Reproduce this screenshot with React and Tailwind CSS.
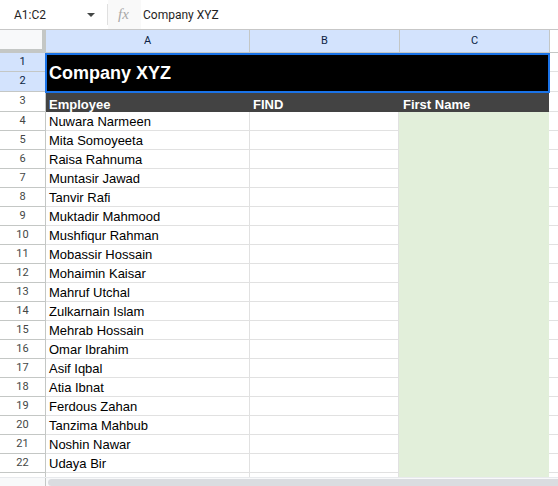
import React from 'react';

const names = [
  'Nuwara Narmeen',
  'Mita Somoyeeta',
  'Raisa Rahnuma',
  'Muntasir Jawad',
  'Tanvir Rafi',
  'Muktadir Mahmood',
  'Mushfiqur Rahman',
  'Mobassir Hossain',
  'Mohaimin Kaisar',
  'Mahruf Utchal',
  'Zulkarnain Islam',
  'Mehrab Hossain',
  'Omar Ibrahim',
  'Asif Iqbal',
  'Atia Ibnat',
  'Ferdous Zahan',
  'Tanzima Mahbub',
  'Noshin Nawar',
  'Udaya Bir',
];

// fila de datos
const DataRow = ({ n, name }) => (
  <div className="flex h-[19px]">
    <div className="w-[46px] shrink-0 border-r border-b border-[#c4c7c5] flex items-center justify-center text-[11px] text-[#444746] font-['Roboto',sans-serif]">
      {n}
    </div>
    <div className="w-[204px] shrink-0 border-r border-b border-[#e1e1e1] pl-[3px] flex items-end text-[13px] leading-[16px] text-black">
      {name}
    </div>
    <div className="w-[149px] shrink-0 border-r border-b border-[#e1e1e1]" />
    <div className="w-[150px] shrink-0 bg-[#e2efda]" />
    <div className="flex-1 border-b border-[#e1e1e1]" />
  </div>
);

export default function App() {
  return (
    <div className="w-[558px] h-[486px] overflow-hidden bg-white font-['Liberation_Sans',Arial,sans-serif]">
      {/* Barra de fórmulas */}
      <div className="flex h-[30px] border-b border-[#c7c7c7] font-['Roboto',sans-serif] text-[12px] text-[#1f1f1f]">
        <div className="w-[107px] shrink-0 flex items-center pl-[14px] pr-[12px] justify-between">
          <span>A1:C2</span>
          <svg width="8" height="4" viewBox="0 0 8 4">
            <path d="M0 0 L8 0 L4 4 Z" fill="#444746" />
          </svg>
        </div>
        <div className="w-px my-[4px] bg-[#e0e0e0]" />
        <div className="w-[33px] shrink-0 flex items-center pl-[10px] bg-[#f9f9f9] font-['Liberation_Serif',serif] italic text-[15px] text-[#a8a8a8]">
          fx
        </div>
        <div className="flex items-center pl-[2px]">Company XYZ</div>
      </div>

      {/* Encabezados de columnas */}
      <div className="flex h-[23px] font-['Roboto',sans-serif] text-[11px] text-[#0b1f44]">
        <div className="w-[46px] shrink-0 flex bg-[#f8f9fa]">
          <div className="flex-1 flex flex-col">
            <div className="flex-1" />
            <div className="h-[4px] bg-[#c4c7c5]" />
          </div>
          <div className="w-[4px] bg-[#c4c7c5]" />
        </div>
        <div className="w-[204px] shrink-0 bg-[#d3e3fd] border-r border-b border-[#c4c7c5] flex items-center justify-center">A</div>
        <div className="w-[150px] shrink-0 bg-[#d3e3fd] border-r border-b border-[#c4c7c5] flex items-center justify-center">B</div>
        <div className="w-[150px] shrink-0 bg-[#d3e3fd] border-r border-b border-[#c4c7c5] flex items-center justify-center">C</div>
        <div className="flex-1 border-b border-[#c4c7c5]" />
      </div>

      {/* Filas 1-2 combinadas */}
      <div className="flex h-[39px]">
        <div className="w-[46px] shrink-0 flex flex-col font-['Roboto',sans-serif] text-[11px] text-[#0b1f44]">
          <div className="h-[19px] bg-[#d3e3fd] border-r border-b border-[#c4c7c5] flex items-center justify-center">1</div>
          <div className="h-[20px] bg-[#d3e3fd] border-r border-b border-[#c4c7c5] flex items-center justify-center">2</div>
        </div>
        <div className="relative w-[503px] shrink-0 bg-black flex items-center pl-[3px] pt-[2px]">
          <span className="font-bold text-[18px] text-white">Company XYZ</span>
          <div className="absolute -left-px -right-px top-0 -bottom-px border-2 border-[#1a73e8]" />
        </div>
        <div className="flex-1 flex flex-col">
          <div className="h-[19px] border-b border-[#e1e1e1]" />
          <div className="h-[20px] border-b border-[#e1e1e1]" />
        </div>
      </div>

      {/* Fila 3: encabezados de tabla */}
      <div className="flex h-[20px]">
        <div className="w-[46px] shrink-0 border-r border-b border-[#c4c7c5] flex items-center justify-center text-[11px] text-[#444746] font-['Roboto',sans-serif]">
          3
        </div>
        <div className="w-[503px] shrink-0 bg-[#434343] flex items-end text-[13px] leading-[15px] font-bold text-white">
          <div className="w-[204px] pl-[3px]">Employee</div>
          <div className="w-[150px] pl-[3px]">FIND</div>
          <div className="w-[149px] pl-[3px]">First Name</div>
        </div>
        <div className="flex-1 border-b border-[#e1e1e1]" />
      </div>

      {names.map((name, i) => (
        <DataRow key={name} n={i + 4} name={name} />
      ))}

      {/* Fila 23 parcial */}
      <div className="flex h-[4px]">
        <div className="w-[46px] shrink-0 border-r border-[#c4c7c5]" />
        <div className="w-[204px] shrink-0 border-r border-[#e1e1e1]" />
        <div className="w-[149px] shrink-0 border-r border-[#e1e1e1]" />
        <div className="w-[150px] shrink-0 bg-[#e2efda]" />
        <div className="flex-1" />
      </div>

      {/* Barra de desplazamiento */}
      <div className="flex h-[9px] bg-[#f8f9fa] border-t border-[#e8eaed]">
        <div className="w-[46px] shrink-0 border-r border-[#c4c7c5]" />
        <div className="flex-1 pl-[2px] pt-[1px]">
          <div className="h-full bg-[#dadce0] rounded-l-[4px]" />
        </div>
      </div>
    </div>
  );
}
